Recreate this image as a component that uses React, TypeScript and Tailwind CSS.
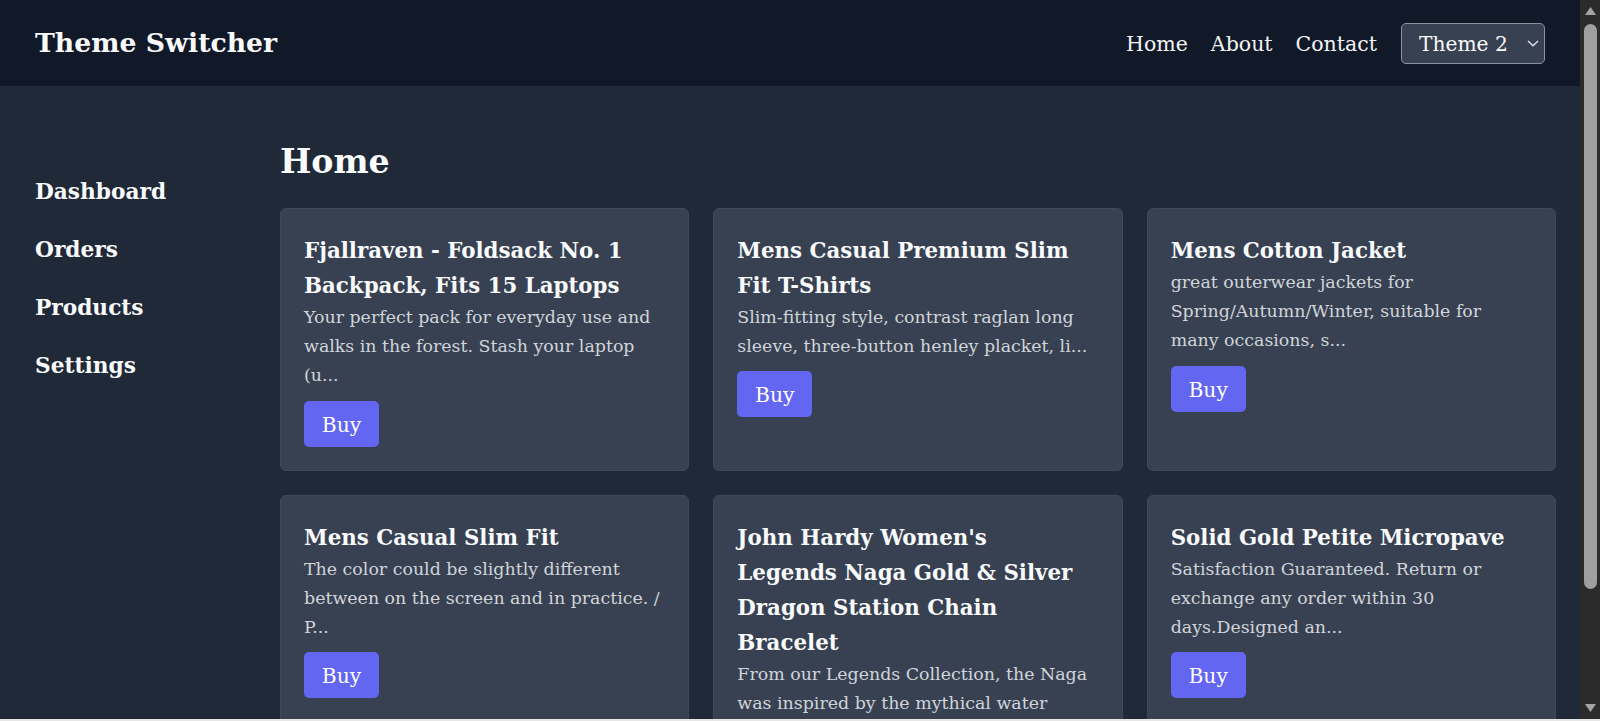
import React from "react";

type Product = { title: string; description: string };

const products: Product[] = [
  {
    title: "Fjallraven - Foldsack No. 1 Backpack, Fits 15 Laptops",
    description:
      "Your perfect pack for everyday use and walks in the forest. Stash your laptop (up to 15 inches) in the padded sleeve, your everyday",
  },
  {
    title: "Mens Casual Premium Slim Fit T-Shirts",
    description:
      "Slim-fitting style, contrast raglan long sleeve, three-button henley placket, light weight & soft fabric for breathable and comfortable wearing.",
  },
  {
    title: "Mens Cotton Jacket",
    description:
      "great outerwear jackets for Spring/Autumn/Winter, suitable for many occasions, such as working, hiking, camping, mountain/rock climbing, cycling, traveling or other outdoors.",
  },
  {
    title: "Mens Casual Slim Fit",
    description:
      "The color could be slightly different between on the screen and in practice.\u00a0/ Please note that body builds vary by person, therefore, detailed size information should be reviewed below on the product description.",
  },
  {
    title: "John Hardy Women's Legends Naga Gold & Silver Dragon Station Chain Bracelet",
    description:
      "From our Legends Collection, the Naga was inspired by the mythical water dragon that protects the ocean's pearl. Wear facing inward to be bestowed with love and abundance, or outward for protection.",
  },
  {
    title: "Solid Gold Petite Micropave",
    description:
      "Satisfaction Guaranteed. Return or exchange any order within 30 days.Designed and sold by Hafeez Center in the United States.",
  },
];

function Chevron() {
  return (
    <svg width="12" height="7" viewBox="0 0 12 7" fill="none">
      <path d="M1 1l5 4.8 5-4.8" stroke="#e5e7eb" strokeWidth="1.3" />
    </svg>
  );
}

function Triangle({ down }: { down?: boolean }) {
  return (
    <svg width="11" height="8" viewBox="0 0 11 8">
      <polygon points={down ? "0,0 11,0 5.5,8" : "0,8 11,8 5.5,0"} fill="#a3a3a3" />
    </svg>
  );
}

function Card({ p }: { p: Product }) {
  const short = p.description.slice(0, 80) + "...";
  return (
    <div className="rounded-md border border-[#3f4858] bg-[#374151] px-[23px] pb-[23px] pt-[24px]">
      <h3 className="max-w-[345px] text-[21.35px] font-bold leading-[35px] text-[#f9fafb]">{p.title}</h3>
      <p className="text-[17.4px] leading-[29.2px] text-[#d1d5db]">{short}</p>
      <button className="mt-[10px] h-[46px] w-[75px] rounded-[5px] bg-[#6366f1] pt-[3px] text-center text-[20.3px] leading-[43px] text-white">
        Buy
      </button>
    </div>
  );
}

export default function App() {
  return (
    <div className="flex h-[721px] w-[1600px] flex-col overflow-hidden font-['DejaVu_Serif',serif]">
      <div className="flex min-h-0 flex-1">
        <div className="flex min-w-0 flex-1 flex-col overflow-hidden bg-[#1f2937]">
          <header className="flex h-[86px] shrink-0 items-center justify-between bg-[#111827] px-[35px]">
            <div className="text-[26.7px] font-bold text-[#f9fafb]">Theme Switcher</div>
            <nav className="flex items-center gap-[23px] text-[20.5px] text-[#f3f4f6]">
              <a href="#" className="pt-[2px]">Home</a>
              <a href="#" className="pt-[2px]">About</a>
              <a href="#" className="pt-[2px]">Contact</a>
              <div className="relative ml-px">
                <select
                  defaultValue="Theme 2"
                  className="h-[41px] w-[144px] appearance-none rounded-[5px] border border-[#8b93a1] bg-[#374151] pl-[17px] pt-[2px] text-[20.2px] text-[#f9fafb] outline-none"
                >
                  <option>Theme 1</option>
                  <option>Theme 2</option>
                  <option>Theme 3</option>
                </select>
                <span className="pointer-events-none absolute right-[6px] top-[17px] flex">
                  <Chevron />
                </span>
              </div>
            </nav>
          </header>
          <div className="flex min-h-0 flex-1">
            <aside className="w-[256px] shrink-0 px-[35px] pt-[77px]">
              <ul className="text-[21.7px] font-bold leading-[58px] text-[#f9fafb]">
                <li>Dashboard</li>
                <li>Orders</li>
                <li>Products</li>
                <li>Settings</li>
              </ul>
            </aside>
            <main className="min-w-0 flex-1 px-6 pt-[56px]">
              <h1 className="mb-[26px] text-[33.2px] font-bold leading-[40px] text-[#f9fafb]">Home</h1>
              <div className="grid grid-cols-3 gap-6">
                {products.map((p) => (
                  <Card key={p.title} p={p} />
                ))}
              </div>
            </main>
          </div>
        </div>
        <div className="flex w-[20px] shrink-0 flex-col items-center bg-[#2b2b2b]">
          <div className="flex h-[20px] items-center justify-center pt-[2px]">
            <Triangle />
          </div>
          <div className="mt-[4px] h-[565px] w-[13px] rounded-full bg-[#9f9f9f]" />
          <div className="flex-1" />
          <div className="flex h-[20px] items-center justify-center pb-[2px]">
            <Triangle down />
          </div>
        </div>
      </div>
      <div className="h-[2px] shrink-0 bg-[#e6e6e6]" />
    </div>
  );
}
